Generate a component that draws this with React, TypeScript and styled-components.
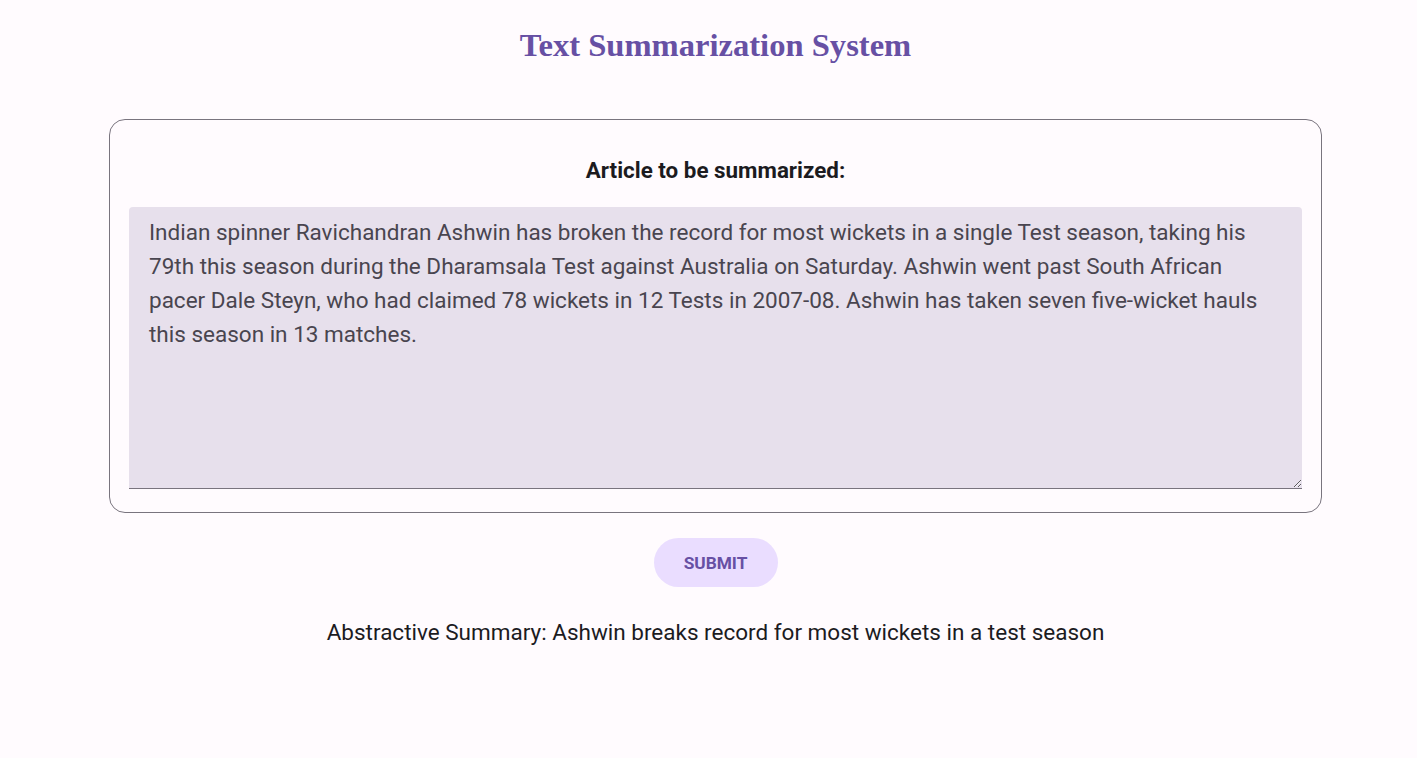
import { useState } from 'react';
import styled, { createGlobalStyle } from 'styled-components';

const GlobalStyle = createGlobalStyle`
  html, body {
    margin: 0;
    background: #fffbfe;
    overflow: hidden;
  }
  body {
    font-family: Roboto, "Liberation Sans", sans-serif;
  }
`;

const Page = styled.div`
  width: 100vw;
  margin-left: 7px;
  min-height: 100vh;
  display: flex;
  flex-direction: column;
  align-items: center;
`;

const Title = styled.h1`
  margin: 27px 0 55px;
  font-family: "Liberation Serif", "Times New Roman", serif;
  font-size: 32.6px;
  font-weight: 700;
  color: #6750a4;
`;

const Card = styled.form`
  box-sizing: border-box;
  width: 1213px;
  border: 1px solid #79747e;
  border-radius: 16px;
  padding: 37px 19px 23px;
  display: flex;
  flex-direction: column;
  align-items: center;
`;

const Label = styled.label`
  font-size: 22.4px;
  font-weight: 700;
  color: #1c1b1f;
  margin-bottom: 24px;
`;

const Area = styled.textarea`
  box-sizing: border-box;
  width: 100%;
  height: 282px;
  resize: vertical;
  border: none;
  border-bottom: 1px solid #79747e;
  border-radius: 4px 4px 0 0;
  background: #e7e0ec;
  color: #49454f;
  font-family: Roboto, "Liberation Sans", sans-serif;
  font-size: 22.5px;
  line-height: 34px;
  padding: 8px 20px;
  outline: none;
`;

const Submit = styled.button`
  margin-top: 25px;
  width: 124px;
  height: 49px;
  border: none;
  border-radius: 25px;
  background: #eaddff;
  color: #6750a4;
  font-family: Roboto, "Liberation Sans", sans-serif;
  font-size: 17.3px;
  font-weight: 700;
  text-transform: uppercase;
  cursor: pointer;
`;

const Result = styled.p`
  margin: 32px 0 0;
  font-size: 22.5px;
  color: #1c1b1f;
`;

const article =
  'Indian spinner Ravichandran Ashwin has broken the record for most wickets in a single Test season, taking his 79th this season during the Dharamsala Test against Australia on Saturday. Ashwin went past South African pacer Dale Steyn, who had claimed 78 wickets in 12 Tests in 2007-08. Ashwin has taken seven five-wicket hauls this season in 13 matches.';

export default function App() {
  const [text, setText] = useState(article);
  return (
    <>
      <GlobalStyle />
      <Page>
        <Title>Text Summarization System</Title>
        <Card onSubmit={(e) => e.preventDefault()}>
          <Label htmlFor="article">Article to be summarized:</Label>
          <Area id="article" value={text} onChange={(e) => setText(e.target.value)} />
        </Card>
        <Submit type="button">Submit</Submit>
        <Result>Abstractive Summary: Ashwin breaks record for most wickets in a test season</Result>
      </Page>
    </>
  );
}
